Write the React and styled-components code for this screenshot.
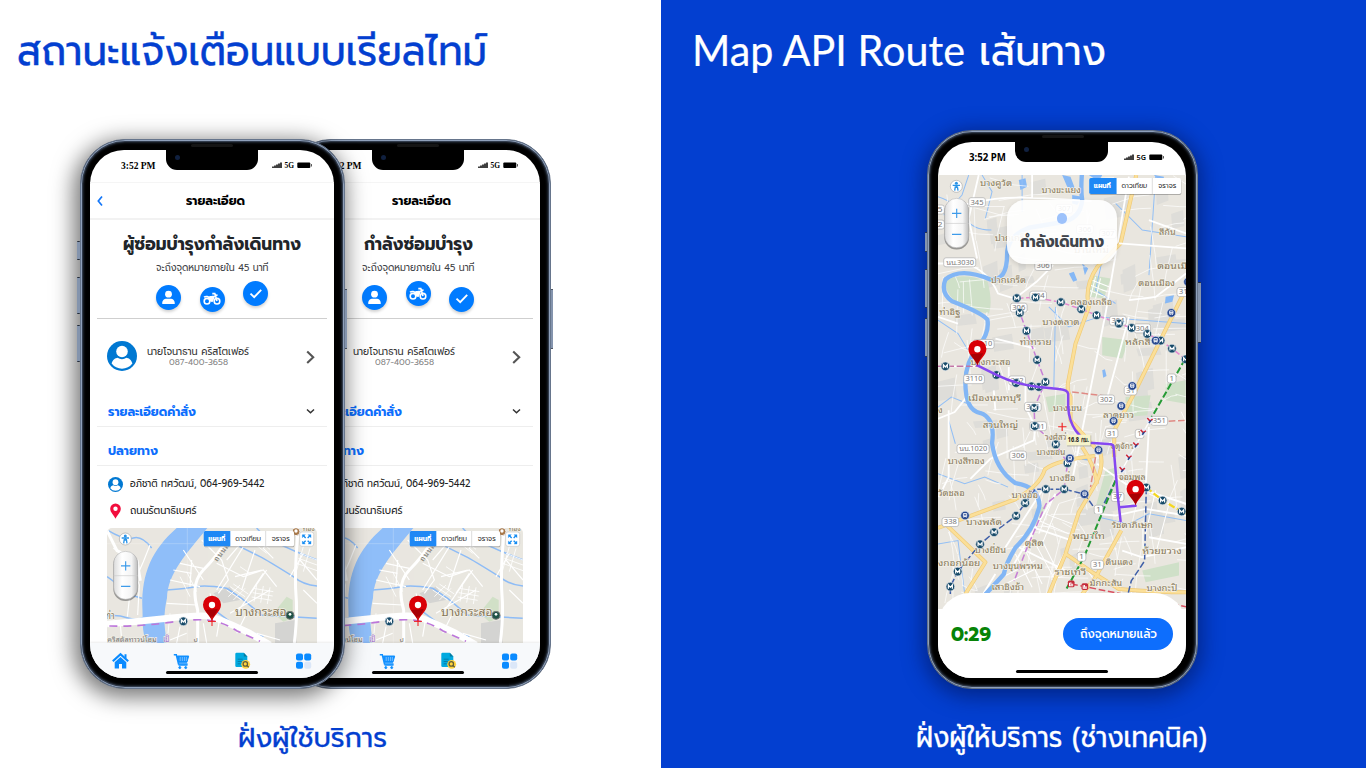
import React, { useLayoutEffect, useRef, useState } from "react";
import styled, { createGlobalStyle } from "styled-components";

const THAI = '"Prompt", "Kanit", "Noto Sans Thai", "Open Sans", "Noto Sans", sans-serif';
const MAP_FONT = '"Noto Sans Thai Looped", "Loma", "Waree", "Garuda", "Noto Sans", sans-serif';

const GlobalStyle = createGlobalStyle`
  * { box-sizing: border-box; }
  html, body { margin: 0; width: 1366px; height: 768px; overflow: hidden; background: #fff; }
  body { font-family: ${THAI}; }
`;

/* ---------- text that is condensed or widened to its measure ---------- */

const FitBox = styled.span`
  display: block;
  flex: none;
  width: ${(p) => p.$w}px;
  height: ${(p) => p.$h || 14}px;
  line-height: ${(p) => p.$h || 14}px;
  margin: ${(p) => p.$m || 0};
  font-size: ${(p) => p.$size}px;
  font-weight: ${(p) => p.$weight || 400};
  font-family: ${(p) => p.$font || THAI};
  color: ${(p) => p.$color || "inherit"};
  -webkit-text-stroke: ${(p) => p.$stroke || 0}px currentColor;
  white-space: nowrap;
`;
const FitInner = styled.span`
  display: inline-block;
  transform-origin: 0 50%;
  line-height: inherit;
  vertical-align: top;
`;
function Fit({ children, w, h, size, weight, color, font, m, stroke }) {
  const ref = useRef(null);
  const [scale, setScale] = useState(1);
  useLayoutEffect(() => {
    if (ref.current && ref.current.offsetWidth) setScale(w / ref.current.getBoundingClientRect().width);
  }, [w]);
  return (
    <FitBox $w={w} $h={h} $size={size} $weight={weight} $color={color} $font={font} $m={m} $stroke={stroke}>
      <FitInner ref={ref} style={{ transform: `scaleX(${scale})` }}>{children}</FitInner>
    </FitBox>
  );
}

/* ---------- page ---------- */

const Page = styled.main`
  display: grid;
  grid-template-columns: 661px 705px;
  width: 1366px;
  height: 768px;
`;
const Panel = styled.section`
  display: flex;
  flex-direction: column;
  overflow: hidden;
  background: ${(p) => (p.$blue ? "#033fd0" : "#fff")};
  color: ${(p) => (p.$blue ? "#fff" : "#033fd0")};
`;
const Title = styled.h1`
  display: flex;
  gap: 14px;
  margin: 0;
  height: ${(p) => p.$h}px;
  padding: 20px 0 0 ${(p) => p.$left}px;
`;
const Stage = styled.div`
  display: flex;
  flex: none;
  height: ${(p) => p.$h}px;
  padding-left: ${(p) => p.$left}px;
`;
const Caption = styled.div`
  display: flex;
  padding: ${(p) => p.$top}px 0 0 ${(p) => p.$left}px;
`;

/* ---------- phone ---------- */

const Frame = styled.div`
  position: relative;
  flex: none;
  z-index: ${(p) => p.$z || 0};
  width: ${(p) => p.$w}px;
  height: ${(p) => p.$h}px;
  margin-left: ${(p) => p.$ml || 0}px;
  padding: ${(p) => p.$pad};
  border-radius: 45px;
  background: #000;
  border: 1px solid #66758c;
  box-shadow: inset 0 0 0 1px #8fa0ba, inset 0 0 0 2px #313b4b, inset 0 0 3px 2px #3d4a5e${(p) => (p.$shadow ? `, ${p.$shadow}` : "")};
`;
const SideKey = styled.i`
  position: absolute;
  ${(p) => p.$side}: -3.5px;
  top: ${(p) => p.$y}px;
  width: 2.5px;
  height: ${(p) => p.$h}px;
  border-radius: 1px;
  background: #8494ad;
  border-top: 1.5px solid #232c3a;
  border-bottom: 1.5px solid #232c3a;
`;
const Screen = styled.div`
  display: flex;
  flex-direction: column;
  width: 100%;
  height: 100%;
  overflow: hidden;
  position: relative;
  border-radius: 34px;
  background: #fff;
  color: #212529;
`;
const Notch = styled.div`
  position: absolute;
  z-index: 4;
  top: -1px;
  left: ${(p) => p.$x}px;
  width: ${(p) => p.$w}px;
  height: 21px;
  border-radius: 0 0 11px 11px;
  background: #000;
  &::after {
    content: "";
    position: absolute;
    left: 9px;
    top: 6px;
    width: 5px;
    height: 5px;
    border-radius: 50%;
    background: #10203f;
  }
`;
const Speaker = styled.i`
  position: absolute;
  top: 4px;
  left: 50%;
  width: 42px;
  height: 3px;
  margin-left: -21px;
  border-radius: 2px;
  background: #151515;
`;
const StatusBar = styled.div`
  display: flex;
  flex: none;
  align-items: flex-start;
  height: 33px;
  padding: ${(p) => p.$pad};
  color: #000;
  border-bottom: ${(p) => (p.$line ? "1px solid #f5f5f5" : "none")};
`;
const Grow = styled.span`
  flex: 1;
`;
const Indicator = styled.div`
  position: absolute;
  z-index: 3;
  left: 50%;
  bottom: ${(p) => p.$b || 4}px;
  width: 92px;
  height: 3px;
  margin-left: -46px;
  border-radius: 2px;
  background: #000;
`;

function Status({ serif }) {
  return (
    <StatusBar $line={serif} $pad={serif ? "8px 21px 0 31px" : "8px 21px 0 31px"}>
      <Fit w={serif ? 34.5 : 37} h={serif ? 16 : 14} size={serif ? 10.5 : 10} weight={700} font={serif ? '"Liberation Serif", serif' : '"Noto Sans", sans-serif'}>3:52 PM</Fit>
      <Grow />
      <svg width="41" height="13" viewBox="0 -.5 41 13">
        <path d="M1 9.5V8M3 9.5V7M5 9.5V6M7 9.5V5M9 9.5V4" stroke="#000" strokeWidth="1.5" />
        <text x="12.5" y="9.6" fontSize="7.8" fontWeight={serif ? 700 : 600} fontFamily={serif ? '"Liberation Serif", serif' : '"Noto Sans", sans-serif'} textLength="9.5" lengthAdjust="spacingAndGlyphs">5G</text>
        <rect x="25.3" y="4" width="13" height="5.6" rx="1" fill="#000" />
        <rect x="39" y="5.6" width="1" height="2.4" fill="#555" />
      </svg>
    </StatusBar>
  );
}

/* ---------- order details screen ---------- */

const NavHeader = styled.div`
  display: flex;
  flex: none;
  align-items: center;
  height: 37px;
  padding-left: 7px;
  border-bottom: 2px solid #f2f2f2;
`;
const Center = styled.div`
  display: flex;
  flex: none;
  justify-content: center;
  height: ${(p) => p.$h}px;
  padding-top: ${(p) => p.$top || 0}px;
`;
const Steps = styled.div`
  display: flex;
  flex: none;
  gap: 18.5px;
  height: 43px;
  margin: 0 7px;
  padding: 5px 0 0 59px;
  border-bottom: 1.6px solid #cfcfcf;
`;
const Step = styled.span`
  display: grid;
  place-items: center;
  width: 25px;
  height: 25px;
  margin-top: ${(p) => p.$down}px;
  border-radius: 50%;
  background: #007bff;
  box-shadow: 0 2px 3px rgba(0, 0, 0, 0.18);
`;
const Person = styled.div`
  display: flex;
  flex: none;
  align-items: flex-start;
  height: 77px;
  padding: 22px 19px 0 17px;
`;
const PersonText = styled.div`
  display: flex;
  flex-direction: column;
  align-items: center;
  width: 102px;
  margin-left: 10px;
  padding-top: 4px;
`;
const SectionHead = styled.div`
  display: flex;
  flex: none;
  align-items: center;
  justify-content: space-between;
  height: ${(p) => p.$h}px;
  margin: 0 7px;
  padding: ${(p) => p.$top}px 12px 0 10.5px;
  border-bottom: 1.4px solid #eee;
`;
const InfoList = styled.div`
  flex: none;
  height: 62px;
  padding-top: 5px;
`;
const InfoRow = styled.div`
  display: flex;
  align-items: center;
  gap: 7px;
  height: 26.5px;
  padding-left: 17.5px;
`;
const MapCard = styled.div`
  flex: none;
  width: 210px;
  height: 115px;
  margin-left: 17px;
  border-radius: 5px 5px 0 0;
  overflow: hidden;
  & > svg { display: block; }
`;
const TabBar = styled.nav`
  display: flex;
  flex: 1;
  justify-content: space-between;
  padding: 9px 22px 0 22px;
  background: #f7f9fb;
  box-shadow: 0 -1px 2px rgba(0, 0, 0, 0.08);
`;

const UserGlyph = () => (
  <svg width="15" height="15" viewBox="0 0 15 15" fill="#fff">
    <circle cx="7.5" cy="4.2" r="3.4" />
    <path d="M1.2 13.5c0-3.5 2.3-4.7 4.2-4.7h4.2c1.9 0 4.2 1.2 4.2 4.7 0 .4-.3.6-.6.6H1.8c-.3 0-.6-.2-.6-.6z" />
  </svg>
);
const BikeGlyph = () => (
  <svg width="18" height="14" viewBox="0 0 18 14" fill="none" stroke="#fff">
    <circle cx="4" cy="9.2" r="2.8" strokeWidth="1.6" />
    <circle cx="14" cy="9.2" r="2.8" strokeWidth="1.6" />
    <path d="M1 5.2c2-1.3 4.600-.8 6 1.300L9.400 9.200M9.300 1.600h2.500L14 9M6.500 4.800h5M14.500 2.800l-3 1.600" strokeWidth="1.6" />
    <path d="M5.500 5.500L9 3.800h3L10 9.700H7.500z" fill="#fff" stroke="none" />
  </svg>
);
const CheckGlyph = () => (
  <svg width="14" height="12" viewBox="0 0 14 12">
    <path d="M1.500 5.600L5.200 9.100 12.200 1.800" fill="none" stroke="#fff" strokeWidth="1.900" />
  </svg>
);
const Avatar = ({ size }) => (
  <svg width={size} height={size} viewBox="0 0 30 30">
    <circle cx="15" cy="15" r="15" fill="#0078d2" />
    <circle cx="15" cy="10.500" r="5.800" fill="#fff" />
    <path d="M4.600 22.500c1-4 4-5.600 6-5.800 2.600 1.900 6.200 1.900 8.800 0 2 .2 5 1.800 6 5.800a13 13 0 0 1-20.800 0z" fill="#fff" />
  </svg>
);

function Pin({ x, y, s = 1 }) {
  return (
    <g transform={`translate(${x} ${y}) scale(${s})`}>
      <path d="M0 0C-3-17-27-29-27-50A27 27 0 0 1 27-50C27-29 3-17 0 0z" fill="#d90007" />
      <path d="M0 0C-3-15-16-24-20-34L17-37C13-24 3-17 0 0z" fill="#8d0003" opacity=".65" />
      <circle cx="0" cy="-49" r="9.500" fill="#fff" />
    </g>
  );
}
function MapText({ t, x, x2, y, size = 28, color = "#86785a", halo = "#f4f1e8", weight = 400 }) {
  return (
    <text x={x} y={y} fontSize={size} fill={color} stroke={halo} strokeWidth="4" paintOrder="stroke" fontWeight={weight}
      textLength={x2 - x} lengthAdjust="spacingAndGlyphs" fontFamily={MAP_FONT}>{t}</text>
  );
}
function Metro({ x, y, blue }) {
  return (
    <g transform={`translate(${x} ${y})`}>
      <circle r="13" fill={blue ? "#26478f" : "#174a68"} stroke="#dfe6ec" strokeWidth="2" />
      {blue
        ? <path d="M-5-6h10v9h-10zM-5-1h10M-4 6l2-3M4 6l-2-3" fill="none" stroke="#fff" strokeWidth="2.500" />
        : <path d="M-6 6V-5L0 2 6-5V6" fill="none" stroke="#fff" strokeWidth="3.600" />}
    </g>
  );
}
function ZoomControl({ x, y, h }) {
  return (
    <g>
      <rect x={x - 1} y={y + 3} width="74" height={h} rx="36" fill="#555" opacity=".55" />
      <rect x={x} y={y} width="72" height={h - 2} rx="36" fill="url(#pill)" stroke="#aaa" strokeWidth="1.500" />
      <path d={`M${x} ${y + h / 2}h72`} stroke="#ccc" strokeWidth="2" />
      <path d={`M${x + 22} ${y + h * 0.3}h28m-14-14v28M${x + 22} ${y + h * 0.72}h28`} stroke="#3d9bea" strokeWidth="3.500" />
    </g>
  );
}
function LayerTabs({ x, y, h, a, b, c }) {
  const ty = y + h / 2 + 6;
  return (
    <g fontFamily={THAI} fontSize="19">
      <rect x={x + 1} y={y + 3} width={c - x} height={h} rx="5" fill="#555" opacity=".4" />
      <rect x={x} y={y} width={c - x} height={h} rx="5" fill="#fff" />
      <path d={`M${a} ${y}H${x + 5}q-5 0-5 5V${y + h - 5}q0 5 5 5H${a}z`} fill="#1e88f5" />
      <path d={`M${b} ${y}v${h}`} stroke="#ccc" strokeWidth="2" />
      <text x={x + 14} y={ty} fill="#fff" fontWeight="700" textLength="51" lengthAdjust="spacingAndGlyphs">แผนที่</text>
      <text x={a + 15} y={ty} fill="#333" textLength="77" lengthAdjust="spacingAndGlyphs">ดาวเทียม</text>
      <text x={b + 18} y={ty} fill="#333" textLength="54" lengthAdjust="spacingAndGlyphs">จราจร</text>
    </g>
  );
}
function PersonControl({ x, y }) {
  return (
    <g transform={`translate(${x} ${y})`}>
      <circle r="18" fill="#fff" stroke="#aaa" strokeWidth="2" />
      <circle cy="-9" r="4.500" fill="#2a94e8" />
      <path d="M-11-3H11M0-3V5M-3 0l-2 13M3 0l2 13" stroke="#2a94e8" strokeWidth="4" />
    </g>
  );
}
const PillGradient = () => (
  <linearGradient id="pill" x1="0" x2="1">
    <stop offset="0" stopColor="#dcdcdc" />
    <stop offset=".35" stopColor="#fff" />
    <stop offset=".75" stopColor="#f4f4f4" />
    <stop offset="1" stopColor="#bdbdbd" />
  </linearGradient>
);

function DistrictMap() {
  return (
    <svg width="210" height="115" viewBox="111 54 630 345">
      <defs><PillGradient /></defs>
      <rect x="111" y="54" width="630" height="345" fill="#e9e7e0" />
      <path d="M650 260l-40 50 30 25 28-10v-55z" fill="#cbdfc0" opacity=".8" />
      <path d="M615 340l60-10 5 69h-65zM430 250l50-20 30 40-50 10z" fill="#d4d4d2" />
      <g fill="none" stroke="#8ebcf6" strokeWidth="4.500">
        <path d="M115 62q50 30 75 22t55 30M111 200q30 20 40 35t65 30M290 240q60-5 90-10t90 5l45 30 60 50 165 10M490 100q60 30 80 40t100 60q30 25 71 28M111 318q30-5 60 5t55-2M400 320l40-15 60 45 80 30M560 54q30 40 180 95" />
      </g>
      <path d="M320 54C245 120 215 190 217 290c2 40-2 70 12 109h62c-10-55-10-90 0-135C293 190 350 130 412 54z" fill="#8fbef9" />
      <g fill="none" stroke="#fff">
        <g strokeWidth="3.500">
          <path d="M130 115l50 30 28 80-5 90M240 105l-20 50-20 45M150 330l5 60M180 250l-8 70M310 180l55 10M330 160l70 15M300 210l90 20M290 280l90 5M340 120l60 90M360 230l5-80M395 90l60 60 20 60-30 40M440 160l80 40 60-20 40 50M520 110l-80 130M555 120l-40 120M590 180l-90 130M470 150l60-70 40 20M610 65l-30 50 30 30M700 130l-40 70M690 150l51 60M540 250l40-60M400 340l10 59M450 320l-10 60M500 370l30-60M560 370l70 20M575 180l-80 20M600 240l-120 70M420 250l20 60M330 350l-10 49M350 370l-50 20M700 240l41 40" />
        </g>
        <g strokeWidth="2.800" opacity=".9">
          <path d="M470 240l45 30M480 230l45 30M490 222l45 30M475 260l35-35M490 270l35-35M550 235l60 10M548 248l60 10M545 261l60 10M560 225l-8 50M580 228l-8 50M600 232l-8 50M690 130l51 20M685 145l56 20M680 160l61 22M700 110l-20 70M720 115l-20 70M540 90l50 40M550 78l50 40M510 170l30 20M350 185l30 60M330 200l30 60M300 310l-6 60" />
        </g>
        <path d="M470 90Q440 140 400 180t-17 120v99M683 75q-10 120-5 180t-5 144M111 62l30 60 60 30 10 60" strokeWidth="9" />
        <path d="M111 342Q200 335 290 325T410 318 540 370l60 35" strokeWidth="20" />
      </g>
      <path d="M118 348Q210 350 300 337T430 333 500 362l70 32" fill="none" stroke="#bd77da" strokeWidth="5" strokeDasharray="24 18" />
      <path d="M352 54v345M111 101h300" stroke="#fff" strokeWidth="1.500" opacity=".4" />
      <g transform="translate(442 156) rotate(-53)"><text fontSize="22" fill="#76726a" textLength="105" fontFamily={MAP_FONT}>ถนนสนาม</text></g>
      <MapText t="บางกระสอ" x={495} x2={650} y={317} size={36} />
      <MapText t="ท่า" x={106} x2={134} y={327} size={30} />
      <MapText t="คริสตัลทาวน์โฮม" x={112} x2={260} y={397} size={22} color="#777" />
      <MapText t="เป็" x={280} x2={298} y={396} size={25} color="#9864cf" />
      <text x="371" y="395" fontSize="18" fill="#666" fontFamily={THAI}>ป</text>
      <circle cx="660" cy="316" r="12" fill="#1f5346" stroke="#777" strokeWidth="3" /><circle cx="660" cy="313" r="4" fill="#fff" />
      <circle cx="678" cy="65" r="12" fill="#a9794a" stroke="#eee" strokeWidth="3" />
      <circle cx="678" cy="63" r="5" fill="#fff" />
      <MapText t="ทอง" x={698} x2={735} y={64} size={18} />
      <Metro x={340} y={334} />
      <Pin x={426} y={334} />
      <path d="M426 320v28M414 334h24" stroke="#f01515" strokeWidth="3" />
      <PersonControl x={166} y={87} />
      <ZoomControl x={131} y={124} h={146} />
      <LayerTabs x={401} y={63} h={46} a={481} b={587} c={672} />
      <rect x="689" y="66" width="42" height="43" rx="7" fill="#fff" stroke="#bbb" strokeWidth="1.500" />
      <g fill="#168df2" stroke="#168df2" strokeWidth="4">
        <path d="M697 83v-9h9zM714 74h9v9zM697 93v9h9zM714 102h9v-9z" strokeWidth="1" />
        <path d="M699 76l8 8M721 76l-8 8M699 100l8-8M721 100l-8-8" />
      </g>
    </svg>
  );
}

function TabIcons() {
  return (
    <>
      <svg width="17" height="18" viewBox="0 0 17 18">
        <path d="M.8 9.300L8.500 2.200l7.700 7.100" fill="none" stroke="#0a8bff" strokeWidth="2.200" />
        <path d="M12.500 2.200h2v4h-2zM2.700 10.300l5.800-5.300 5.800 5.300v6.200H10v-4.400H7v4.400H2.700z" fill="#0a8bff" />
      </svg>
      <svg width="17" height="18" viewBox="0 0 17 18" fill="none" stroke="#1190ff">
        <path d="M.8 2.800h2.500l2.200 9.200h9" strokeWidth="1.500" />
        <path d="M4.300 4h11.400l-1.800 6.300H5.700z" fill="#1190ff" strokeWidth="1" />
        <path d="M7.200 5v4M9.300 5v4M11.400 5v4M13.300 5v4" stroke="#a3d3ff" strokeWidth=".7" />
        <path d="M5.500 13h9" strokeWidth="1.300" />
        <circle cx="6.800" cy="15.600" r="1" fill="#1190ff" /><circle cx="12.700" cy="15.600" r="1" fill="#1190ff" />
      </svg>
      <svg width="17" height="18" viewBox="0 0 17 18">
        <path d="M2.500.8h7.300l3.500 3.700v10.500H2.500q-1.200 0-1.200-1.200V2Q1.300.8 2.500.8z" fill="#00a9df" />
        <path d="M9.800.8l3.500 3.700H9.800z" fill="#087b9f" />
        <path d="M3.700 7.200h5M3.700 9.500h5M3.700 11.800h3" stroke="#057faa" strokeWidth="1" />
        <circle cx="11.700" cy="12.300" r="4.400" fill="#ffd43d" />
        <circle cx="11.300" cy="11.900" r="2.200" fill="none" stroke="#615e39" strokeWidth="1.300" />
        <path d="M12.700 13.300l2 2" stroke="#615e39" strokeWidth="1.300" />
      </svg>
      <svg width="17" height="18" viewBox="0 0 17 18">
        <g fill="#0a8bff">
          <rect x="1" y="1.500" width="7" height="7" rx="2" /><rect x="9.200" y="1.500" width="7" height="7" rx="2" />
          <rect x="1" y="9.700" width="7" height="7" rx="2" />
        </g>
        <rect x="9.200" y="9.700" width="7" height="7" rx="2" fill="#dbe7f8" />
      </svg>
    </>
  );
}

function OrderPhone({ heading, headingWidth, steps, front }) {
  return (
    <Frame $w={265} $h={550} $ml={front ? 0 : -59} $z={front ? 2 : 1} $pad="10px 9.500px 10px 9.500px"
      $shadow={front ? "-3px 5px 22px 3px rgba(0,0,0,.55)" : ""}>
      {front && <><SideKey $side="left" $y={101} $h={19} /><SideKey $side="left" $y={137} $h={37} /><SideKey $side="left" $y={185} $h={37} /></>}
      <SideKey $side="right" $y={149} $h={60} />
      <Speaker />
      <Screen>
        <Notch $x={76} $w={92} />
        <Status serif />
        <NavHeader>
          <svg width="6" height="12" viewBox="0 0 6 12"><path d="M5 1.500L1.300 6 5 10.500" fill="none" stroke="#1477f8" strokeWidth="1.700" /></svg>
          <Fit w={59} h={18} size={12} weight={700} color="#000" m="0 0 0 82.500px">รายละเอียด</Fit>
        </NavHeader>
        <Center $h={40} $top={11}>
          <Fit w={headingWidth} h={26} size={18} weight={700}>{heading}</Fit>
        </Center>
        <Center $h={16}>
          <Fit w={112.500} h={16} size={10.500} color="#3f4347">จะถึงจุดหมายภายใน 45 นาที</Fit>
        </Center>
        <Steps>
          <Step $down={4}><UserGlyph /></Step>
          <Step $down={steps[0]}><BikeGlyph /></Step>
          <Step $down={steps[1]}><CheckGlyph /></Step>
        </Steps>
        <Person>
          <Avatar size={30} />
          <PersonText>
            <Fit w={102} h={13} size={10.500} color="#333">นายโจนาธาน คริสโตเฟอร์</Fit>
            <Fit w={59} h={9} size={8.500} color="#858585">087-400-3658</Fit>
          </PersonText>
          <Grow />
          <svg width="9" height="32" viewBox="0 0 9 32"><path d="M1.200 10.500L7.200 16.300 1.200 22" fill="none" stroke="#555" strokeWidth="2.100" /></svg>
        </Person>
        <SectionHead $h={31} $top={1}>
          <Fit w={88} h={18} size={12} weight={700} color="#0d6efd">รายละเอียดคำสั่ง</Fit>
          <svg width="9" height="7" viewBox="0 0 9 7"><path d="M1 1.500l3.500 3.300L8 1.500" fill="none" stroke="#333" strokeWidth="1.500" /></svg>
        </SectionHead>
        <SectionHead $h={39} $top={9}>
          <Fit w={50} h={18} size={12} weight={700} color="#0d6efd">ปลายทาง</Fit>
        </SectionHead>
        <InfoList>
          <InfoRow>
            <Avatar size={15} />
            <Fit w={134.500} h={16} size={11} color="#222">อภิชาติ ทศวัฒน์, 064-969-5442</Fit>
          </InfoRow>
          <InfoRow>
            <svg width="15" height="16" viewBox="0 0 15 16"><path d="M7.500 15.700C6 12.300 2.200 9.500 2.200 5.800a5.300 5.300 0 0 1 10.600 0c0 3.700-3.800 6.500-5.300 9.900z" fill="#f20d3d" /><circle cx="7.500" cy="5.700" r="2.200" fill="#fff" /></svg>
            <Fit w={66.500} h={16} size={11} color="#222">ถนนรัตนาธิเบศร์</Fit>
          </InfoRow>
        </InfoList>
        <MapCard><DistrictMap /></MapCard>
        <TabBar><TabIcons /></TabBar>
        <Indicator />
      </Screen>
    </Frame>
  );
}

/* ---------- route screen ---------- */

const RouteArea = styled.div`
  flex: none;
  height: 418px;
  & > svg { display: block; }
`;
const Toast = styled.div`
  position: absolute;
  top: 58.500px;
  left: 69px;
  width: 110px;
  height: 64px;
  display: flex;
  flex-direction: column;
  align-items: center;
  gap: 5px;
  padding-top: 13px;
  border-radius: 18px;
  background: rgba(255, 255, 255, 0.9);
  box-shadow: 0 2px 5px rgba(0, 0, 0, 0.12);
`;
const Dot = styled.i`
  width: 10.500px;
  height: 10.500px;
  border-radius: 50%;
  background: #9dc2fb;
`;
const Sheet = styled.div`
  position: relative;
  z-index: 2;
  display: flex;
  flex: 1;
  align-items: flex-start;
  justify-content: space-between;
  padding: 25.5px 13px 0 13px;
  border-radius: 32px 32px 0 0;
  background: #fff;
`;
const ArriveButton = styled.button`
  display: flex;
  align-items: center;
  justify-content: center;
  width: 110px;
  height: 32px;
  padding: 0;
  border: 0;
  border-radius: 16px;
  background: #0d6efd;
  color: #fff;
`;

const PLACES = [
  ["บางคูวัด", 194, 290, 197], ["บางขะแยง", 378, 496, 220], ["ปากเกร็ด", 238, 345, 362], ["ปากเกร็ด", 226, 332, 488],
  ["ดอนเมือง", 668, 778, 497], ["ดอนเมือง", 725, 850, 448], ["สีกัน", 730, 780, 346], ["ท่าอิฐ", 72, 135, 585], ["บ้านใหม่", 475, 580, 398],
  ["คลองเกลือ", 465, 590, 555], ["บางตลาด", 380, 492, 613], ["ท่าทราย", 313, 408, 675], ["หลักสี่", 628, 705, 673],
  ["บางกระสอ", 165, 285, 735], ["เมืองนนทบุรี", 158, 317, 842], ["บางเขน", 412, 500, 872], ["ลาดยาว", 562, 655, 893],
  ["สวนใหญ่", 202, 308, 922], ["วงศ์สว่าง", 388, 475, 960], ["จตุจักร", 585, 655, 985], ["บางซ่อน", 363, 450, 1003],
  ["บางสีทอง", 97, 208, 1032], ["บางซื่อ", 402, 480, 1082], ["จอมพล", 610, 690, 1078], ["วัดชลอ", 68, 148, 1127],
  ["บางอ้อ", 288, 368, 1132], ["บางพลัด", 152, 260, 1212], ["รัชดาภิเษก", 588, 712, 1222], ["พญาไท", 470, 568, 1255],
  ["ดุสิต", 328, 385, 1275], ["บางยี่ขัน", 178, 272, 1296], ["ห้วยขวาง", 680, 798, 1300], ["งกอกน้อย", 68, 195, 1336],
  ["บางขุนพรหม", 232, 382, 1344], ["ดินแดง", 570, 652, 1332], ["ราชเทวี", 417, 512, 1362], ["เสาชิงช้า", 228, 326, 1408],
  ["มักกะสัน", 522, 620, 1397], ["บางกะปิ", 693, 785, 1410], ["ง", 68, 82, 877],
];
const SHIELDS = [
  ["345", 185, 246], ["307", 446, 266], ["306", 508, 327], ["307", 577, 341], ["นบ.3030", 133, 426], ["306", 383, 437],
  ["304", 368, 526], ["306", 310, 562], ["3110", 205, 671], ["3110", 176, 776], ["302", 305, 780], ["302", 572, 837],
  ["31", 645, 810], ["31", 588, 938], ["351", 731, 901], ["1", 768, 774], ["304", 607, 601], ["304", 680, 624],
  ["นบ.1020", 173, 985], ["306", 308, 1005], ["338", 105, 1204], ["1", 549, 1167], ["37", 606, 1129], ["1", 498, 1308],
  ["31", 545, 1332], ["31", 803, 515], ["5", 74, 268], ["2", 74, 313], ["335", 352, 859], ["301", 368, 917], ["1", 672, 940],
];
const METROS = [
  [304, 534], [360, 532], [436, 546], [497, 567], [543, 585], [313, 578], [610, 610], [648, 623], [695, 641], [735, 661], [769, 685],
  [810, 717], [333, 632], [365, 719], [90, 738], [243, 764], [302, 788], [348, 798], [370, 800], [390, 785], [356, 863],
  [358, 917], [421, 972], [456, 1028], [391, 1106], [446, 1106], [329, 1148], [302, 1186], [236, 1235], [194, 1271],
  [127, 1353], [105, 1398], [692, 1101], [741, 1140], [798, 1173],
];
const TRAINS = [[767, 578], [720, 661], [650, 797], [617, 857], [594, 902], [549, 989], [463, 1014], [507, 1121], [149, 1185], [817, 485]];
const STOPS = [[703, 900], [683, 935], [661, 973], [640, 1010], [620, 1047]];

const EXPRESSWAYS = "M662 165l-47 205-70 70q-40 60-25 120l-40 110-23 120q-2 25 8 40v70l90 100q10 40-15 90l-50 85-40 125-50 120M811 505L650 830l-54 100v80M617 1230l-77 140-40 50M68 1222l230-85q75-40 90-90 40-30 150-40M90 1210l120 115-60 95M450 1300q30 20 80 55l80 50q120 10 201 10M545 1090q-10-60-45-110";

function makeStreets() {
  let seed = 17;
  const rnd = () => (seed = (seed * 16807) % 2147483647) / 2147483647;
  const streets = [];
  const blocks = [];
  for (let i = 0; i < 230; i++) {
    const x = 60 + rnd() * 750, y = 165 + rnd() * 1260, a = rnd() * 50 - 25, b = 25 + rnd() * 70;
    streets.push(i % 2 ? `M${x} ${y}l${a} ${b}l${a * 0.3} ${b * 0.5}` : `M${x} ${y}l${b} ${-a}l${b * 0.6} ${-a * 0.2}`);
  }
  for (let i = 0; i < 60; i++) {
    const x = 60 + rnd() * 750, y = 165 + rnd() * 1260, w = 20 + rnd() * 55, h = 20 + rnd() * 55;
    blocks.push(`M${x} ${y}l${w} ${-h * 0.25}l${w * 0.1} ${h}l${-w} ${h * 0.2}z`);
  }
  return [streets.join(""), blocks.join("")];
}
const [STREETS, BLOCKS] = makeStreets();

function CityMap() {
  return (
    <svg width="248" height="434" viewBox="68 165 743 1300" preserveAspectRatio="none">
      <defs><PillGradient /></defs>
      <rect x="68" y="165" width="743" height="1300" fill="#e9e6df" />
      <path d={BLOCKS} fill="#d8d8d5" opacity=".7" />
      <path d="M92 480q50-25 125 5 15 60 4 95-70-10-105-40-30-30-24-60zM530 465l55 10-20 60-45-5zM560 650l80 10-20 55-60-10zM630 830l75-5-10 60-65 5zM390 830l60-10v50l-50 5zM570 1050l35-10-50 130-20 10zM680 1350l110-25v40l-100 20zM360 1170l30-15-30 70zM750 790l60-10v70l-60-10z" fill="#cfe0c8" />
      <path d="M310 180l20-5 5 25-20 10zM470 225l30 5-15 25-15-5zM460 460l15-5 10 25-12 5zM750 530l25-5-5 20-22 5zM440 165l25 5 15 40-25-10zM500 430l18 15-10 20zM715 165l30 5-5 25zM500 1005l28 4-5 12-25-3zM520 165h40l-10 20zM560 750l8-3 5 20-10 5z" fill="#86b8f5" />
      <g fill="none" stroke="#92bff5" strokeWidth="3">
        <path d="M68 230q60 20 80 60t80 40M160 165l-20 60-55 60M68 600l60 40 30 50M68 1060l80 30 60-20 70 30M400 560l60 60 90-30 261 20M560 420l-20 90 60 40M68 1270l60-10 20 160M420 560l-5 240M68 860l40-30 50 20M200 165l30 50-20 80M320 165v110M600 250l80 80 131 20M550 1190l90 20 60-30 111 20M100 900l20 70M720 165l-20 300" />
      </g>
      <path d={STREETS} fill="none" stroke="#fff" strokeWidth="2.400" opacity=".85" />
      <g fill="none" stroke="#fff" strokeWidth="5.500">
        <path d="M68 265q70-10 120-18 60-20 200-12l140 8M68 430l80 0q70 20 100 90l50 15 65-50 50-50M240 655l120 30M190 165l-30 130 25 120M350 165v70M68 738h118M470 1080l60-300 40-200 70-410M68 895l50-20 40-50M100 870v200l-30 60M280 740v70M235 810l5 60M330 790v70l30 60-5 40-130 55-60 60M545 1030l85 60 181 60M700 920l-10 180M640 590l-70 260M68 590l60 20M700 300l111 40M640 540l80-10 91-70M380 1110l-110 170M420 1120l-130 220M310 1280l160 80M350 1220l120 40M540 1180l60 5 90-20 121 20M700 1250l111 20M620 1290l60 20 131-30M240 1360l-40 65" />
      </g>
      <g fill="none" stroke="#fff" strokeWidth="3">
        <path d="M240 1380l120-60M250 1400l120-60M300 1300l50 100M330 1290l50 100M360 1270l60 110M380 1260l50 100M390 1180l80 30M370 1200l90 40M410 1140l-40 100M430 1150l-50 120M470 1250l-60 120M490 1310l60 90M700 1120l80 40M720 1110l-30 130M760 1150l-40 150M530 480l50 20M525 495l50 20M520 510l50 20M540 470l-15 60M555 475l-15 60" />
      </g>
      <path d="M500 150q-5 60 0 90-5 60-70 68l-90 15q-65 25-65 80 0 80-50 75-90-38-135 0-15 40 20 65 90 35 106 55 7 40-26 78-40 50-40 110 0 85 45 92 45 15 35 90 10 80 70 120 70 10 72 68-15 70-72 125-30 50-35 80-45 50-55 60v40" fill="none" stroke="#82b6f5" strokeWidth="13" strokeLinejoin="round" />
      <g fill="none" strokeLinejoin="round">
        <path d={EXPRESSWAYS} stroke="#efca78" strokeWidth="12" />
        <path d={EXPRESSWAYS} stroke="#fbdf98" strokeWidth="8" />
        <path d="M610 370l201 15" stroke="#fff" strokeWidth="5" />
        <g strokeWidth="4.500" strokeDasharray="20 8">
          <path d="M304 534l56-2 76 14 61 21 46 18 67 25 38 13 47 18 40 20 34 24 41 32" stroke="#e489cf" />
          <path d="M304 534l9 44 20 54 32 87 25 66-34 78 2 54 63 55 35 56-10 78-55 45-60 140-35 90" stroke="#c77fd6" />
          <path d="M68 738h118" stroke="#c275a5" />
          <path d="M105 1420v-22l22-45 67-82 42-36 66-49 27-38 30-42 32 0h55l61 15 25 35M692 1101l-5 220-40 60-15 60M600 1080l-40 80" stroke="#3f5fa8" />
          <path d="M692 1101l49 39 57 33 40 15" stroke="#f4d722" strokeWidth="7" />
          <path d="M808 717L703 900M600 1080l-95 230-55 100" stroke="#259a35" strokeWidth="6" />
          <path d="M540 1010l-15 90M470 815l100 12M703 905l108-5" stroke="#df8a84" />
          <path d="M467 1390l41 8 100 20 203 40" stroke="#d95060" />
        </g>
        <path d="M703 900L620 1047" stroke="#fff" strokeWidth="4" />
      </g>
      {SHIELDS.map(([t, x, y], i) => {
        const w = t.length > 4 ? 96 : 14 + t.length * 12;
        return (
          <g key={i}>
            <rect x={x - w / 2} y={y - 13} width={w} height="27" rx="7" fill="#fff" stroke="#aaa" strokeWidth="2" />
            <text x={x} y={y + 7.500} fontSize="21" textAnchor="middle" fill="#777" textLength={w - 11} lengthAdjust="spacingAndGlyphs" fontFamily='"Noto Sans", sans-serif'>{t}</text>
          </g>
        );
      })}
      {PLACES.map(([t, x, x2, y], i) => <MapText key={i} t={t} x={x} x2={x2} y={y} />)}
      {METROS.map(([x, y], i) => <Metro key={i} x={x} y={y} />)}
      {TRAINS.map(([x, y], i) => <Metro key={i} x={x} y={y} blue />)}
      {STOPS.map(([x, y], i) => (
        <g key={i} transform={`translate(${x} ${y})`}>
          <rect x="-10" y="-10" width="20" height="20" rx="3" fill="#e9edf5" />
          <path d="M-8-7L0 2l8-6" fill="none" stroke="#d02533" strokeWidth="4.500" /><path d="M-3 8L3 0" stroke="#26478f" strokeWidth="4.500" />
        </g>
      ))}
      {[[467, 1390], [508, 1398]].map(([x, y]) => (
        <g key={x} transform={`translate(${x} ${y})`}><rect x="-10" y="-10" width="20" height="20" rx="5" fill="#c52c3b" /><path d="M-5-4v9H6M-1-5v6h7" fill="none" stroke="#fff" strokeWidth="3" /></g>
      ))}
      <path d="M186 735l57 29q57 28 127 36l60 6q26 2 28 14v40q2 40 22 70l25 30 15 7 60 4q13 0 14 9l6 70 7 80 8 72M611 1160l49-4" fill="none" stroke="#8547f0" strokeWidth="7.500" strokeLinejoin="round" strokeLinecap="round" />
      <path d="M440 907v25M428 919h25" stroke="#f02424" strokeWidth="3.500" />
      <rect x="455" y="945" width="72" height="33" fill="#777" opacity=".5" />
      <rect x="453" y="943" width="72" height="32" fill="#f6f3c9" />
      <text x="457" y="965" fontSize="19" fontWeight="700" fill="#222" textLength="64" lengthAdjust="spacingAndGlyphs" fontFamily='"Noto Sans", sans-serif'>16.8 กม.</text>
      <Pin x={186} y={736} />
      <Pin x={660} y={1155} />
      <PersonControl x={123} y={199} />
      <ZoomControl x={88} y={235} h={150} />
      <LayerTabs x={521} y={174} h={48} a={603} b={710} c={796} />
    </svg>
  );
}

function RoutePhone() {
  return (
    <Frame $w={271} $h={559} $pad="10.500px 11px 10.500px 10px" $shadow="0 4px 20px 4px rgba(0,14,70,.5)">
      <SideKey $side="left" $y={101} $h={20} /><SideKey $side="left" $y={138} $h={39} /><SideKey $side="left" $y={187} $h={39} />
      <SideKey $side="right" $y={151} $h={61} />
      <Speaker />
      <Screen>
        <Notch $x={77} $w={93} />
        <Status />
        <RouteArea><CityMap /></RouteArea>
        <Toast>
          <Dot />
          <Fit w={84} h={26} size={16} weight={700} color="#40444b">กำลังเดินทาง</Fit>
        </Toast>
        <Sheet>
          <Fit w={40} h={34} size={19} weight={700} color="#078307">0:29</Fit>
          <ArriveButton><Fit w={77} h={20} size={12} weight={500} color="#fff">ถึงจุดหมายแล้ว</Fit></ArriveButton>
        </Sheet>
        <Indicator $b={5} />
      </Screen>
    </Frame>
  );
}

export default function App() {
  return (
    <>
      <GlobalStyle />
      <Page>
        <Panel>
          <Title $left={17} $h={139}><Fit w={470} h={62} size={42} stroke={0.4}>สถานะแจ้งเตือนแบบเรียลไทม์</Fit></Title>
          <Stage $left={79.5} $h={550}>
            <OrderPhone front heading="ผู้ซ่อมบำรุงกำลังเดินทาง" headingWidth={178} steps={[5.5, 0]} />
            <OrderPhone heading="กำลังซ่อมบำรุง" headingWidth={109} steps={[0, 5.5]} />
          </Stage>
          <Caption $left={238} $top={27}><Fit w={149} h={44} size={27} stroke={0.3}>ฝั่งผู้ใช้บริการ</Fit></Caption>
        </Panel>
        <Panel $blue>
          <Title $left={31} $h={130}>
            <Fit w={273} h={61} size={42} stroke={0.2} font='"Lato", sans-serif'>Map API Route</Fit>
            <Fit w={127} h={62} size={42} stroke={0.2}>เส้นทาง</Fit>
          </Title>
          <Stage $left={266} $h={559}><RoutePhone /></Stage>
          <Caption $left={255} $top={26}><Fit w={291} h={45} size={28} stroke={0.3}>ฝั่งผู้ให้บริการ (ช่างเทคนิค)</Fit></Caption>
        </Panel>
      </Page>
    </>
  );
}
